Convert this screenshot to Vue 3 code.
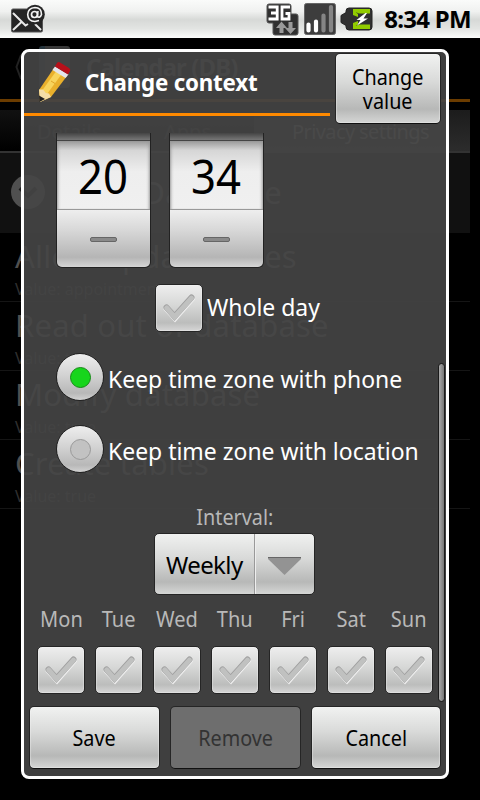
<script setup>
const days = ['Mon', 'Tue', 'Wed', 'Thu', 'Fri', 'Sat', 'Sun']
const permissions = [
  { title: 'Allow update times', value: 'Value: appointment' },
  { title: 'Read out of database', value: 'Value: true' },
  { title: 'Modify database', value: 'Value: true' },
  { title: 'Create tables', value: 'Value: true' }
]
const wheels = ['20', '34']
</script>

<template>
  <div class="screen">
    <svg class="defs" width="0" height="0">
      <defs>
        <symbol id="tick" viewBox="0 0 34 30">
          <path d="M4.500 15.500 L13 25 L30 5.500" fill="none" stroke="#eeeeee" stroke-width="6" stroke-linecap="round" />
          <path d="M4.500 14.500 L12.500 23.500 L29.500 4.500" fill="none" stroke="#a0a0a0" stroke-width="6" stroke-linecap="round" />
          <path d="M4.700 15 L12.600 24 L29.500 5.200" fill="none" stroke="#c0c1c0" stroke-width="5" stroke-linecap="round" />
        </symbol>
      </defs>
    </svg>

    <header class="status">
      <svg class="mail" width="36" height="30" viewBox="0 0 36 30">
        <rect x="1.500" y="5" width="31" height="23" rx="1.500" fill="#252525" stroke="#555" />
        <path d="M3 9 L13 19 L15.500 21.500 L18 20 M3 26 L12 17.500 M25 20 L31 26" fill="none" stroke="#e8e8e8" stroke-width="2" />
        <circle cx="25" cy="10.500" r="9.800" fill="#252525" />
        <circle cx="24.500" cy="10.500" r="3" fill="none" stroke="#f4f4f4" stroke-width="1.700" />
        <path d="M28 7 L27.300 12.500 Q30 14.500 31.500 10.500 Q31.500 3.500 25 3.500 Q18 4 17.700 10.500 Q18 17.500 25 17.500 L29 16.500" fill="none" stroke="#f4f4f4" stroke-width="1.600" />
      </svg>
      <div class="indicators">
        <svg width="34" height="33" viewBox="0 0 34 33">
          <path d="M3 1 H23 Q25 1 25 3 V11 H30 Q32 11 32 13 V30 Q32 32 30 32 H9 Q7 32 7 30 V20 H3 Q1 20 1 18 V3 Q1 1 3 1Z" fill="#303030" stroke="#555" />
          <path d="M2.500 4 H11.200 V16 H2.500 M5 10 H11 M24 4 H16 V16 H23 V10.500 H19.500" fill="none" stroke="#fff" stroke-width="2.800" />
          <path d="M10 25 L15.500 18.500 L21 25 H17.500 V30 H13.500 V25Z M19 25 H22.500 V19 H26.500 V25 H30 L24.500 31Z" fill="#9a9a9a" />
        </svg>
        <svg width="32" height="32" viewBox="0 0 32 32">
          <rect x=".5" y=".5" width="31" height="31" rx="2" fill="#3d3d3d" stroke="#666" />
          <path d="M4.500 21.500 V27.500 M12 18.500 V27.500" stroke="#fff" stroke-width="4.200" stroke-linecap="round" />
          <path d="M19.500 12.500 V27.500 M27 4 V27.500" stroke="#858585" stroke-width="4.200" stroke-linecap="round" />
        </svg>
        <svg width="33" height="24" viewBox="0 0 33 24">
          <path d="M9 1 H29 Q32 1 32 4 V20 Q32 23 29 23 H9 Q6 23 6 20 V18.500 L1 15.500 V8.500 L6 5.500 V4 Q6 1 9 1Z" fill="#303030" stroke="#222" />
          <path d="M13 2 H30 V6.500 H19 L13 4Z M13 22 H30 V17.500 H19 L13 20Z M13 3 L18 7 V10 L13 8Z M13 21 L18 17 V14 L13 16Z" fill="#92cc00" />
          <path d="M25.500 6 L16.500 13 H20.500 L17 18.500 L28 11.500 H23.500 L27 6Z" fill="#fff" />
        </svg>
      </div>
      <span class="clock">8:34 PM</span>
    </header>

    <main class="activity">
      <div class="app-bar">
        <svg width="8" height="28" viewBox="0 0 8 28"><path d="M6 2 L1.500 14 L6 26" fill="none" stroke="#222" stroke-width="2" /></svg>
        <span class="app-icon"></span>
        <span class="app-title">Calendar (DB)</span>
      </div>
      <div class="tabs">
        <span class="tab">Details</span>
        <span class="tab">Apps</span>
        <span class="tab current">Privacy settings</span>
      </div>
      <div class="group">
        <svg width="34" height="34" viewBox="0 0 34 34"><circle cx="17" cy="17" r="17" fill="#505050" /><path d="M9 13 L17 21 L25 13" fill="none" stroke="#1c1c1c" stroke-width="4" /></svg>
        <span>Use Database</span>
      </div>
      <div v-for="p in permissions" :key="p.title" class="permission">
        <span class="p-title">{{ p.title }}</span>
        <span class="p-value">{{ p.value }}</span>
      </div>
    </main>

    <section class="dialog">
      <div class="head">
        <div class="title">
          <svg width="34" height="42" viewBox="0 0 34 42">
            <path d="M1 29 L16 7 L29 15 L13 36 L2 41Z" fill="#e9b02c" />
            <path d="M4.500 29 L19 9 L24.500 12 L9 33Z" fill="#f8d45c" />
            <path d="M13 20 L17 22.500" stroke="#e0a528" />
            <path d="M1 28.500 L5 28.500 L8 32 L11 32.500 L13 36 L2 41Z" fill="#f3dda8" />
            <path d="M1 34.500 L7 38 L1.500 41Z" fill="#222" />
            <path d="M14.500 9 L17 5.500 L30.500 13.500 L27.500 17Z" fill="#e5e5ec" />
            <path d="M17 5.500 L19 2 Q20.500 .5 22 1.500 L31 7 Q33 8.500 32 10 L30 13.500Z" fill="#b8101a" />
          </svg>
          <h1>Change context</h1>
        </div>
        <button class="btn change"><span>Change<br>value</span></button>
      </div>

      <div class="body">
        <div class="wheels">
          <div v-for="w in wheels" :key="w" class="wheel">
            <div class="wheel-top"></div>
            <div class="wheel-value"><span>{{ w }}</span></div>
            <div class="wheel-minus"><i></i></div>
          </div>
        </div>
        <div class="whole">
          <span class="check"><svg width="34" height="30"><use href="#tick" /></svg></span>
          <span class="label whole-label">Whole day</span>
        </div>
        <div class="radio">
          <span class="knob on"><i></i></span>
          <span class="label">Keep time zone with phone</span>
        </div>
        <div class="radio">
          <span class="knob"><i></i></span>
          <span class="label">Keep time zone with location</span>
        </div>
        <div class="interval"><span>Interval:</span></div>
        <div class="select">
          <span class="select-value">Weekly</span>
          <span class="select-arrow">
            <svg width="34" height="20" viewBox="0 0 34 20"><path d="M0 1 H33 V3 L16.500 19 L0 3Z" fill="#939393" /><path d="M0 1.500 H33" stroke="#666" /></svg>
          </span>
        </div>
        <div class="days">
          <div v-for="d in days" :key="d" class="day">
            <span class="day-name">{{ d }}</span>
            <span class="check"><svg width="34" height="30"><use href="#tick" /></svg></span>
          </div>
        </div>
        <div class="scrollbar"></div>
      </div>

      <div class="actions">
        <button class="btn"><span>Save</span></button>
        <button class="btn disabled"><span>Remove</span></button>
        <button class="btn"><span>Cancel</span></button>
      </div>
    </section>
  </div>
</template>

<style>
body { background: #000; }
</style>

<style scoped>
* { box-sizing: border-box; }
.screen { position: relative; width: 480px; height: 800px; overflow: hidden; background: #000; font-family: "Noto Sans", "Open Sans", sans-serif; white-space: nowrap; }
.defs { position: absolute; }
.status { height: 38px; display: flex; align-items: center; padding: 0 9px 0 10px; background: linear-gradient(#fafbfa 0, #f0f1f0 30%, #d7d9d7 52%, #e2e4e2 75%, #fbfcfb 100%); }
.indicators { display: flex; align-items: center; gap: 4px; margin-left: 220px; }
.indicators svg { flex: none; }
.clock { margin-left: auto; font-weight: 700; font-size: 24px; line-height: 38px; letter-spacing: -.7px; color: #000; }

.activity { width: 470px; color: #505050; }
.app-bar { height: 64px; display: flex; align-items: center; padding: 0 0 4px 15px; border-bottom: 3px solid #6b3c00; }
.app-icon { width: 31px; height: 42px; margin-left: 16px; border-radius: 3px; background: linear-gradient(90deg, #26343c 20%, #383838 20%); }
.app-title { margin-left: 16px; font-weight: 700; font-size: 24px; letter-spacing: -.9px; }
.tabs { display: flex; height: 43px; margin-top: 8px; border-bottom: 2px solid #333; background: linear-gradient(#111, #000); }
.tab { width: 127px; padding-left: 37px; font-size: 20px; line-height: 44px; color: #2c2c2c; }
.tab.current { width: 216px; padding-left: 38px; background: linear-gradient(#1c1c1c, #2c2c2c); color: #707070; letter-spacing: -.6px; }
.group { height: 80px; display: flex; align-items: center; gap: 33px; padding: 0 0 2px 11px; font-size: 31px; letter-spacing: .3px; background: #111; }
.permission { height: 69px; display: flex; flex-direction: column; padding-left: 15px; border-bottom: 1px solid #151515; }
.p-title { height: 46px; font-size: 31px; line-height: 46px; letter-spacing: .2px; }
.p-value { font-size: 16px; line-height: 20px; color: #303030; }

.dialog { position: absolute; left: 21px; top: 49px; width: 428px; height: 730px; display: flex; flex-direction: column; border: 3px solid #fff; border-radius: 8px; background: rgba(69, 69, 69, .91); }
.head { height: 74px; display: flex; justify-content: space-between; align-items: flex-start; padding-right: 5px; }
.title { width: 306px; height: 64px; display: flex; align-items: center; padding: 0 0 1px 14px; border-bottom: 3px solid #ff8a00; }
h1 { margin: 0 0 0 13px; color: #fff; font-size: 24px; line-height: 32px; letter-spacing: -.2px; transform: scaleX(.93); transform-origin: left; }
.btn { padding: 0; border: 1px solid #252525; border-bottom-color: #111; border-radius: 5px; font: 400 22px/24px "Noto Sans", sans-serif; color: #000; background: linear-gradient(#f1f2f1, #d9dad9 40%, #b7b8b7 80%, #d5d6d5 100%); box-shadow: inset 0 0 1px 1px #f4f4f466; }
.btn span { display: inline-block; transform: translateY(-1px) scaleX(.9); }
.change { width: 106px; height: 71px; margin-top: 1px; }
.body { position: relative; height: 525px; display: flex; flex-direction: column; flex: none; padding-top: 7px; }
.wheels { display: flex; gap: 18px; padding-left: 32px; }
.wheel { width: 95px; height: 135px; border: 1px solid #222; border-top: 0; border-radius: 0 0 6px 6px; overflow: hidden; }
.wheel-top { height: 8px; background: linear-gradient(#444, #777); border-bottom: 1px solid #444; }
.wheel-value { height: 68px; display: flex; justify-content: center; font-size: 47px; line-height: 71px; color: #000; background: linear-gradient(#999, #d6d6d6 14%, #eee 45%, #f0f0f0); box-shadow: inset 3px 0 3px -2px #999, inset -3px 0 3px -2px #999; }
.wheel-value span { transform: translateX(-1px) scaleX(.93); }
.wheel-minus { height: 58px; display: flex; align-items: center; justify-content: center; border-top: 1px solid #999; background: linear-gradient(#eee, #d8d8d8 35%, #b5b5b5 83%, #d5d5d5); }
.wheel-minus i { width: 27px; height: 5px; margin-top: 1px; border: 1px solid #666; border-radius: 2px; background: #8a8a8a; }
.whole { display: flex; height: 48px; margin: 16px 0 0 131px; }
.check { width: 48px; height: 48px; flex: none; display: flex; align-items: center; justify-content: center; border: 1px solid #252525; border-radius: 5px; background: linear-gradient(#eee, #d6d7d6 45%, #bcbdbc 82%, #d6d6d6); box-shadow: inset 0 0 1px 1px #f4f4f466; }
.label { color: #fff; font-size: 24px; line-height: 32px; transform: scaleX(.956); transform-origin: left; }
.whole-label { margin: 7px 0 0 4px; }
.radio { height: 48px; display: flex; margin: 21px 0 3px 32px; }
.knob { width: 48px; height: 48px; flex: none; display: flex; align-items: center; justify-content: center; border: 1px solid #222; border-radius: 50%; background: linear-gradient(#eee, #d3d3d3 45%, #b8b8b8 85%, #d2d2d2); }
.knob i { width: 21px; height: 21px; border: 1px solid #999; border-radius: 50%; background: #c2c2c2; }
.knob.on i { border-color: #178917; background: #17d51c; }
.radio .label { margin: 10px 0 0 4px; }
.interval { height: 32px; margin-top: 25px; text-align: center; color: #b8b8b8; font-size: 22px; line-height: 31px; }
.interval span { display: inline-block; transform: scaleX(.9); }
.select { width: 161px; height: 62px; margin: 1px 0 0 130px; display: flex; flex: none; border: 1px solid #252525; border-radius: 5px; background: linear-gradient(#f0f1f0, #d9dad9 40%, #b7b8b7 80%, #d5d6d5); }
.select-value { width: 100px; padding-left: 11px; font-size: 24px; line-height: 61px; letter-spacing: -.6px; border-right: 1px solid #999; color: #000; }
.select-arrow { flex: 1; display: flex; align-items: center; justify-content: center; border-left: 1px solid #eee; padding-top: 3px; }
.days { display: flex; margin: 8px 0 0 8px; }
.day { width: 58px; display: flex; flex-direction: column; align-items: center; flex: none; }
.day-name { height: 43px; color: #b8b8b8; font-size: 22px; line-height: 31px; transform: scaleX(.91); }
.scrollbar { position: absolute; right: 1px; top: 237px; width: 7px; height: 339px; border: 1px solid #1b1b1b; border-radius: 4px; background: linear-gradient(90deg, #aaa, #777); }
.actions { display: grid; grid-template-columns: 131px 131px 130px; justify-content: space-between; margin-top: auto; padding: 0 5px 7px; }
.actions .btn { height: 63px; }
.actions .disabled { color: #333; background: #6e6e6e; box-shadow: none; }
</style>
